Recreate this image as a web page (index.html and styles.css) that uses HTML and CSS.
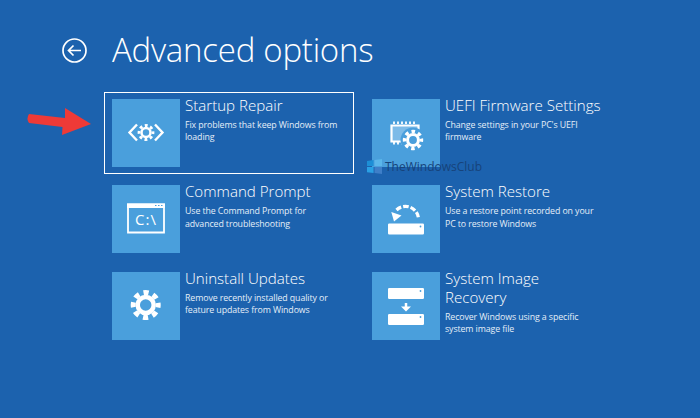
FILE: index.html
```html
<!DOCTYPE html>
<html lang="en">
<head>
<meta charset="utf-8">
<title>Advanced options</title>
<link rel="stylesheet" href="styles.css">
</head>
<body>
<svg class="defs" width="0" height="0" aria-hidden="true">
  <defs>
    <g id="gear">
      <circle r="8" fill="none" stroke="#fff" stroke-width="4.500"/>
      <circle r="12.500" fill="none" stroke="#fff" stroke-width="5" stroke-dasharray="5.200 4.617" stroke-dashoffset="2.600"/>
    </g>
    <g id="drive">
      <path d="M0 1.200a1.200 1.200 0 0 1 1.200-1.200h33.600a1.200 1.200 0 0 1 1.200 1.200v8.600a1.200 1.200 0 0 1-1.200 1.200h-33.600a1.200 1.200 0 0 1-1.200-1.200z" fill="#fff"/>
      <circle cx="32.500" cy="3" r="0.900" fill="#4a9fdc"/>
    </g>
  </defs>
</svg>
<main class="page">
  <header class="head">
    <svg class="back" viewBox="0 0 25 25" width="25" height="25">
      <circle cx="12.500" cy="12.500" r="11.500" fill="none" stroke="#fff" stroke-width="1.700"/>
      <path d="M19 12.500H6.500M11.500 7.500l-5 5 5 5" fill="none" stroke="#fff" stroke-width="1.700"/>
    </svg>
    <h1 class="title">Advanced options</h1>
  </header>
  <section class="grid">
    <article class="item selected">
      <div class="tile">
        <svg viewBox="0 0 68 68" width="68" height="68">
          <use href="#gear" transform="translate(34 33.500) scale(.56)"/>
          <path d="M25 25.500 17.500 33.500 25 41.500M43 25.500 50.500 33.500 43 41.500" fill="none" stroke="#fff" stroke-width="2.400"/>
        </svg>
      </div>
      <div class="text"><h2>Startup Repair</h2><p>Fix problems that keep Windows from loading</p></div>
    </article>
    <article class="item">
      <div class="tile">
        <svg viewBox="0 0 68 68" width="68" height="68">
          <path d="M22 22.500v2.500M26 22.500v2.500M30 22.500v2.500M34 22.500v2.500M38 22.500v2.500M42 22.500v2.500M22 43v2.500M26 43v2.500M30 43v2.500" stroke="#fff" stroke-width="1.800" fill="none"/>
          <path d="M19.500 26.500h27v16h-27z" fill="#7dbbe8" stroke="#fff" stroke-width="2.200"/>
          <circle cx="41" cy="41" r="12.500" fill="#4a9fdc"/>
          <use href="#gear" transform="translate(41 41) scale(.68)"/>
        </svg>
      </div>
      <div class="text"><h2>UEFI Firmware Settings</h2><p>Change settings in your PC's UEFI firmware</p></div>
    </article>
    <article class="item">
      <div class="tile">
        <svg viewBox="0 0 68 68" width="68" height="68">
          <path d="M16 19.500h36v28H16z" fill="none" stroke="#fff" stroke-width="1.800"/>
          <path d="M15 18.500h38v4.500H15z" fill="#fff"/>
          <path d="M43 20.500h1.500M46 20.500h1.500M49 20.500h1.500" stroke="#4a9fdc" stroke-width="1.200"/>
          <text class="prompt" x="23" y="39.500">C:\</text>
        </svg>
      </div>
      <div class="text"><h2>Command Prompt</h2><p>Use the Command Prompt for advanced troubleshooting</p></div>
    </article>
    <article class="item">
      <div class="tile">
        <svg viewBox="0 0 68 68" width="68" height="68">
          <path d="M24.500 25 A13 13 0 0 1 46.500 34" fill="none" stroke="#fff" stroke-width="3.200" stroke-dasharray="5.500 2"/>
          <path d="M19.300 27 29.500 30.500 22 36.500z" fill="#fff"/>
          <use href="#drive" transform="translate(16 38.500)"/>
        </svg>
      </div>
      <div class="text"><h2>System Restore</h2><p>Use a restore point recorded on your PC to restore Windows</p></div>
    </article>
    <article class="item">
      <div class="tile">
        <svg viewBox="0 0 68 68" width="68" height="68">
          <use href="#gear" transform="translate(33.700 33)"/>
        </svg>
      </div>
      <div class="text"><h2>Uninstall Updates</h2><p>Remove recently installed quality or feature updates from Windows</p></div>
    </article>
    <article class="item">
      <div class="tile">
        <svg viewBox="0 0 68 68" width="68" height="68">
          <use href="#drive" transform="translate(16 16)"/>
          <path d="M34 31v4" stroke="#fff" stroke-width="2.500"/>
          <path d="M29 34.500h10l-5 5z" fill="#fff"/>
          <use href="#drive" transform="translate(16 42)"/>
        </svg>
      </div>
      <div class="text"><h2>System Image Recovery</h2><p>Recover Windows using a specific system image file</p></div>
    </article>
  </section>
</main>
<svg class="arrow" viewBox="0 0 66 28" width="66" height="28">
  <path d="M4 7 40 11 40 1 66 17 37 28 37.500 20 4 16Q1 11.500 4 7z" fill="#ee3a37"/>
</svg>
<div class="mark">
  <svg viewBox="0 0 16 16" width="15" height="15"><path d="M0 2 7 1v6.500H0z" fill="#1d8fd6"/><path d="M8 1l8-1v7.500H8z" fill="#5bb6ea"/><path d="M0 8.500h7V15l-7-1z" fill="#2aa0e4"/><path d="M8 8.500h8V16l-8-1z" fill="#3f7fc8"/></svg>
  <span>TheWindowsClub</span>
</div>
</body>
</html>
```

FILE: styles.css
```css
* { box-sizing: border-box; }
html, body { margin: 0; padding: 0; }
body {
  position: relative;
  width: 700px;
  height: 418px;
  overflow: hidden;
  background: #1c62ae;
  color: #fff;
  font-family: "Open Sans", "Noto Sans", sans-serif;
}
.defs { position: absolute; }
.page { padding: 28px 0 0 62px; }
.head { display: flex; align-items: center; gap: 25px; height: 44px; }
.back { flex: none; }
.title {
  margin: 0;
  font-size: 33px;
  font-weight: 300;
  line-height: 44px;
  letter-spacing: -.25px;
  white-space: nowrap;
}
.grid {
  display: grid;
  grid-template-columns: 249.5px 249.5px;
  grid-auto-rows: 82px;
  column-gap: 10.5px;
  row-gap: 4.7px;
  margin: 20px 0 0 42px;
}
.item {
  display: flex;
  gap: 5.5px;
  padding: 5.5px 6.5px;
  border: 1.5px solid transparent;
}
.item.selected { border-color: #fff; }
.tile {
  flex: none;
  width: 68px;
  height: 68px;
  background: #4a9fdc;
}
.tile svg { display: block; }
.text { min-width: 0; padding-right: 2px; margin-top: -3px; }
.text h2 {
  margin: 0;
  max-width: 157px;
  font-size: 15.100px;
  font-weight: 300;
  line-height: 19px;
}
.text p {
  margin: 4px 0 0;
  font-size: 8.800px;
  letter-spacing: -.1px;
  font-weight: 400;
  line-height: 12.500px;
  color: #e4eef8;
}
.prompt { font-size: 15px; letter-spacing: 1px; fill: #fff; font-family: "Open Sans", sans-serif; }
.arrow { position: absolute; left: 25px; top: 107px; }
.mark {
  position: absolute;
  left: 367px;
  top: 158px;
  display: flex;
  align-items: center;
  gap: 3px;
  font-size: 12px;
  color: #17437a;
}
```
